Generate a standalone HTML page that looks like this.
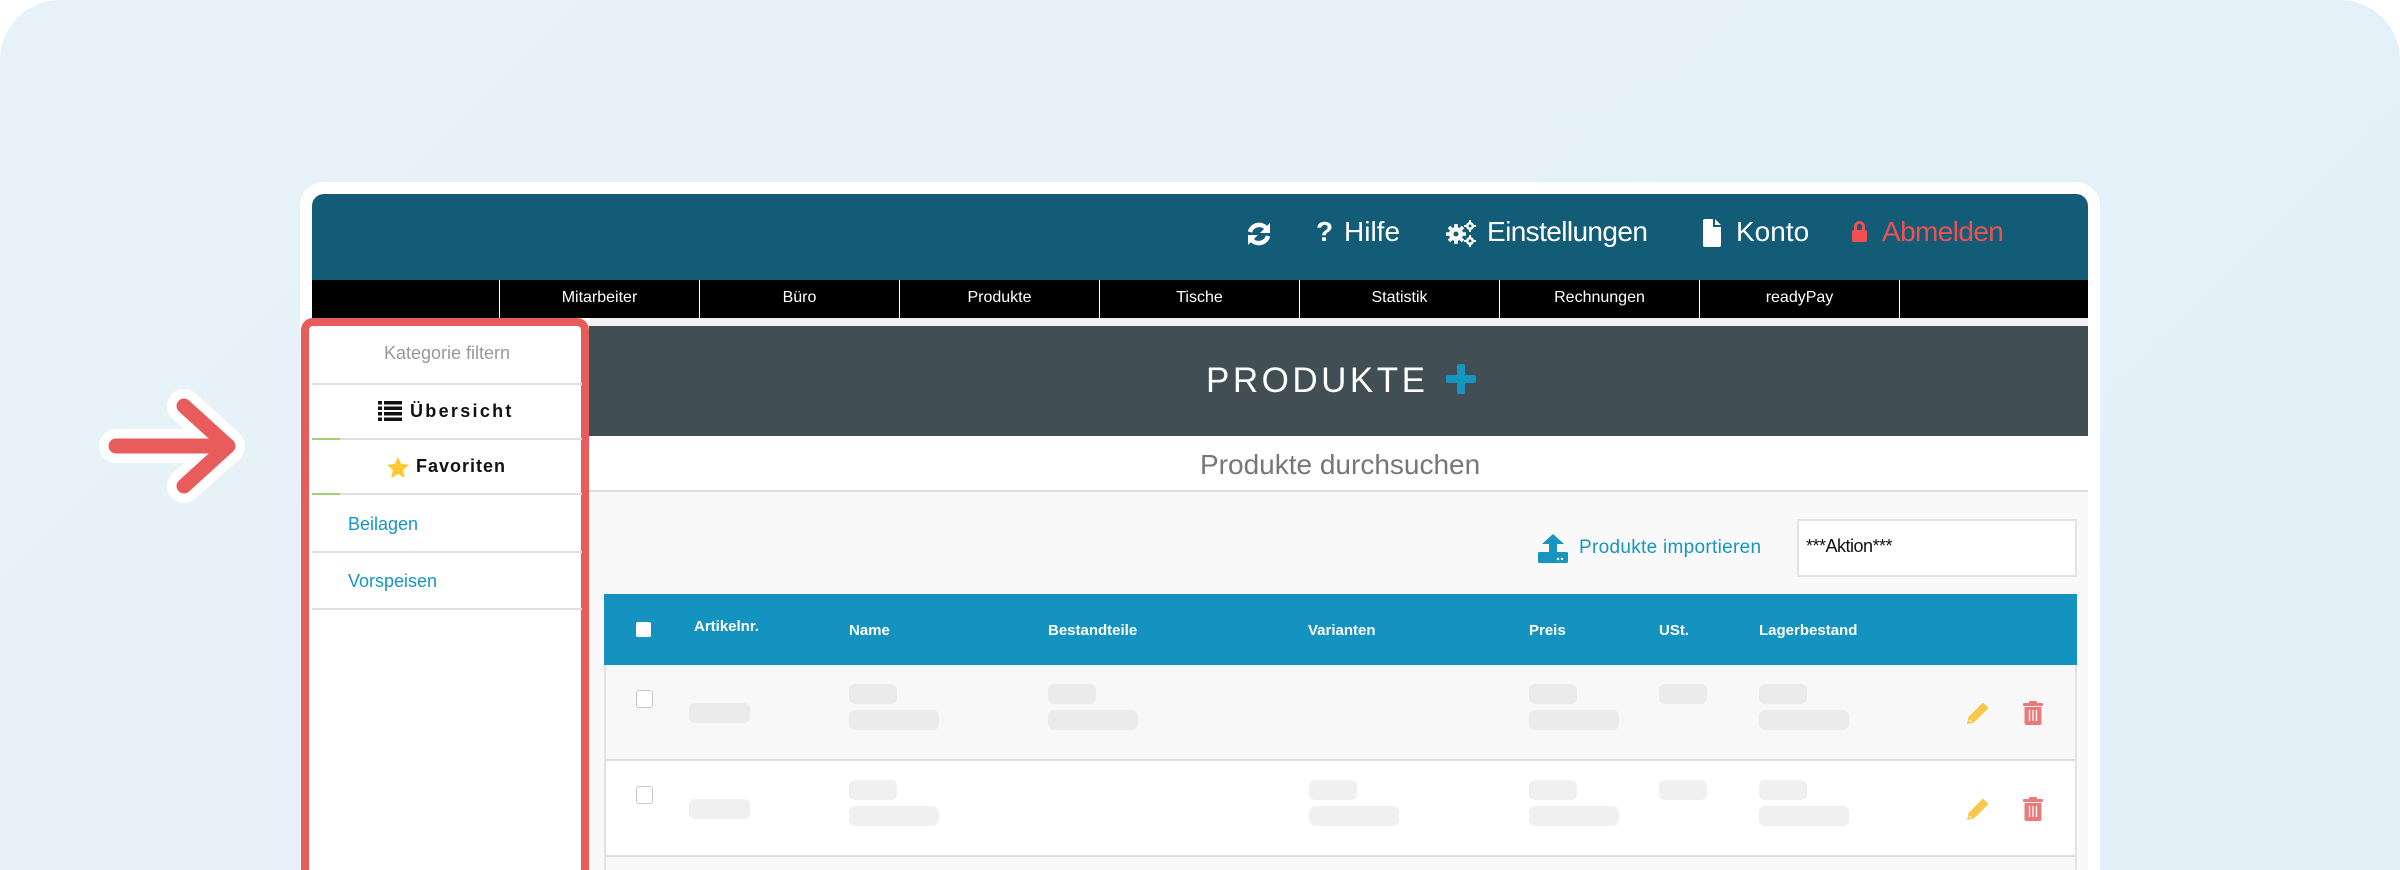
<!DOCTYPE html>
<html><head><meta charset="utf-8"><style>
*{margin:0;padding:0;box-sizing:border-box}
html,body{width:2400px;height:870px;overflow:hidden}
body{background:#fff;font-family:"Liberation Sans",sans-serif;position:relative}
#w{position:absolute;left:0;top:0;width:2400px;height:870px;overflow:hidden}
.a{position:absolute}
.bg{left:0;top:0;width:2400px;height:870px;background:linear-gradient(135deg,#e8f3f9,#e3f0f7);border-radius:60px 60px 0 0}
.t{white-space:nowrap}
.nav{color:#fff;font-size:16px;text-align:center;width:200px;border-left:1px solid #fff;height:38px}
.pill{position:absolute;background:#ebebeb;border-radius:6px;height:20px}
.th{color:#fff;font-weight:bold;font-size:15px;top:622px}
.cb{position:absolute;width:17px;height:18px;border:1px solid #c8c8c8;border-radius:3px;background:#fff}
.sl{left:312px;width:270px;height:2px;background:#e0e0e0}
.sl i{display:block;width:28px;height:2px;background:#9fd37a}
</style></head><body><div id="w">
<div class="a bg"></div>

<svg class="a" style="left:80px;top:370px" width="180" height="150" viewBox="0 0 180 150">
<g fill="none" stroke-linecap="round" stroke-linejoin="round">
<path d="M36 76 H146 M104 36 L148 76 L104 116" stroke="#fff" stroke-width="34"/>
<path d="M36 76 H146 M104 36 L148 76 L104 116" stroke="#e95c5c" stroke-width="15"/>
</g></svg>

<div class="a" style="left:300px;top:182px;width:1800px;height:688px;background:#fff;border-radius:24px 24px 0 0"></div>
<div class="a" style="left:312px;top:194px;width:1776px;height:86px;background:#135c78;border-radius:12px 12px 0 0"></div>
<div class="a" style="left:312px;top:280px;width:1776px;height:38px;background:#000"></div>
<div class="a nav" style="left:499px;top:280px;padding-top:9px">Mitarbeiter</div>
<div class="a nav" style="left:699px;top:280px;padding-top:9px">Büro</div>
<div class="a nav" style="left:899px;top:280px;padding-top:9px">Produkte</div>
<div class="a nav" style="left:1099px;top:280px;padding-top:9px">Tische</div>
<div class="a nav" style="left:1299px;top:280px;padding-top:9px">Statistik</div>
<div class="a nav" style="left:1499px;top:280px;padding-top:9px">Rechnungen</div>
<div class="a nav" style="left:1699px;top:280px;padding-top:9px">readyPay</div>
<div class="a" style="left:1899px;top:280px;width:1px;height:38px;background:#fff"></div>

<svg class="a" style="left:1246px;top:221px" width="26" height="26" viewBox="0 0 26 26"><g fill="none" stroke="#fff" stroke-width="4.5"><path d="M4 11 A9.5 9.5 0 0 1 21 8"/><path d="M22 15 A9.5 9.5 0 0 1 5 18"/></g><path d="M24 2 V12 H14Z M2 24 V14 H12Z" fill="#fff"/></svg>
<div class="a t" style="left:1316px;top:216px;font-size:28px;color:#fff;font-weight:bold">?</div>
<div class="a t" style="left:1344px;top:216px;font-size:28px;color:#fff">Hilfe</div>
<svg class="a" style="left:1445px;top:219px" width="32" height="28" viewBox="0 0 32 28"><g fill="#fff"><circle cx="11" cy="15" r="7"/><g stroke="#fff" stroke-width="3.5"><path d="M11 5v20M1 15h20M4 8l14 14M18 8L4 22"/></g><circle cx="11" cy="15" r="2.5" fill="#135c78"/><circle cx="25" cy="7" r="4"/><circle cx="25" cy="22" r="4"/><g stroke="#fff" stroke-width="2"><path d="M25 1v12M19 7h12M25 16v12M19 22h12"/></g><circle cx="25" cy="7" r="1.5" fill="#135c78"/><circle cx="25" cy="22" r="1.5" fill="#135c78"/></g></svg>
<div class="a t" style="left:1487px;top:216px;font-size:28px;color:#fff;letter-spacing:-0.6px">Einstellungen</div>
<svg class="a" style="left:1703px;top:219px" width="18" height="28" viewBox="0 0 18 28"><path d="M0 2 Q0 0 2 0 H10 V8 H18 V26 Q18 28 16 28 H2 Q0 28 0 26Z M12 0 L18 6 H12Z" fill="#fff"/></svg>
<div class="a t" style="left:1736px;top:216px;font-size:28px;color:#fff">Konto</div>
<svg class="a" style="left:1852px;top:220px" width="15" height="22" viewBox="0 0 15 22"><path d="M3.5 10 V6.5 A4 4 0 0 1 11.5 6.5 V10" fill="none" stroke="#f05050" stroke-width="3"/><rect x="0" y="10" width="15" height="12" rx="2" fill="#f05050"/></svg>
<div class="a t" style="left:1882px;top:216px;font-size:28px;color:#f05050;letter-spacing:-0.6px">Abmelden</div>

<div class="a" style="left:589px;top:318px;width:1499px;height:8px;background:#f0f0f0"></div>
<div class="a" style="left:589px;top:326px;width:1499px;height:110px;background:#414f55"></div>
<div class="a t" style="left:1206px;top:361px;font-size:35px;color:#fff;letter-spacing:3.5px">PRODUKTE</div>
<svg class="a" style="left:1446px;top:364px" width="30" height="30" viewBox="0 0 30 30"><path d="M11 2 Q11 0 13 0 H17 Q19 0 19 2 V11 H28 Q30 11 30 13 V17 Q30 19 28 19 H19 V28 Q19 30 17 30 H13 Q11 30 11 28 V19 H2 Q0 19 0 17 V13 Q0 11 2 11 H11Z" fill="#1795c1"/></svg>
<div class="a t" style="left:1200px;top:449px;font-size:28px;color:#777">Produkte durchsuchen</div>
<div class="a" style="left:589px;top:490px;width:1499px;height:2px;background:#ddd"></div>
<div class="a" style="left:589px;top:492px;width:1499px;height:378px;background:#f9f9f9"></div>

<svg class="a" style="left:1538px;top:534px" width="30" height="30" viewBox="0 0 30 30"><path d="M15 0 L26 10 H19 V19 H11 V10 H4Z" fill="#1795c1"/><rect x="0" y="18" width="30" height="11" rx="1.5" fill="#1795c1"/><rect x="11" y="17" width="8" height="3" fill="#1795c1"/><circle cx="20" cy="25" r="1.2" fill="#fff"/><circle cx="24" cy="25" r="1.2" fill="#fff"/></svg>
<div class="a t" style="left:1579px;top:537px;font-size:19px;color:#1795c1;letter-spacing:0.3px">Produkte importieren</div>
<div class="a" style="left:1797px;top:519px;width:280px;height:58px;background:#fff;border:2px solid #e3e3e3"></div>
<div class="a t" style="left:1806px;top:536px;font-size:18px;color:#111;letter-spacing:-0.5px">***Aktion***</div>

<div class="a" style="left:604px;top:594px;width:1473px;height:276px;border-left:2px solid #e3e3e3;border-right:2px solid #e3e3e3"></div>
<div class="a" style="left:604px;top:594px;width:1473px;height:71px;background:#1593c0"></div>
<div class="a" style="left:636px;top:622px;width:15px;height:15px;background:#fff;border-radius:2px"></div>
<div class="a th" style="left:694px;top:618px">Artikelnr.</div>
<div class="a th" style="left:849px">Name</div>
<div class="a th" style="left:1048px">Bestandteile</div>
<div class="a th" style="left:1308px">Varianten</div>
<div class="a th" style="left:1529px">Preis</div>
<div class="a th" style="left:1659px">USt.</div>
<div class="a th" style="left:1759px">Lagerbestand</div>

<div class="a" style="left:606px;top:665px;width:1469px;height:96px;background:#f8f8f8;border-bottom:2px solid #e0e0e0"></div>
<div class="a" style="left:606px;top:761px;width:1469px;height:96px;background:#fff;border-bottom:2px solid #e0e0e0"></div>
<div class="a" style="left:606px;top:857px;width:1469px;height:13px;background:#f8f8f8"></div>

<div class="cb" style="left:636px;top:690px"></div>
<div class="pill" style="left:689px;top:703px;width:61px"></div>
<div class="pill" style="left:849px;top:684px;width:48px"></div>
<div class="pill" style="left:849px;top:710px;width:90px"></div>
<div class="pill" style="left:1048px;top:684px;width:48px"></div>
<div class="pill" style="left:1048px;top:710px;width:90px"></div>
<div class="pill" style="left:1529px;top:684px;width:48px"></div>
<div class="pill" style="left:1529px;top:710px;width:90px"></div>
<div class="pill" style="left:1659px;top:684px;width:48px"></div>
<div class="pill" style="left:1759px;top:684px;width:48px"></div>
<div class="pill" style="left:1759px;top:710px;width:90px"></div>
<div class="cb" style="left:636px;top:786px"></div>
<div class="pill" style="left:689px;top:799px;width:61px;background:#f0f0f0"></div>
<div class="pill" style="left:849px;top:780px;width:48px;background:#f0f0f0"></div>
<div class="pill" style="left:849px;top:806px;width:90px;background:#f0f0f0"></div>
<div class="pill" style="left:1309px;top:780px;width:48px;background:#f0f0f0"></div>
<div class="pill" style="left:1309px;top:806px;width:90px;background:#f0f0f0"></div>
<div class="pill" style="left:1529px;top:780px;width:48px;background:#f0f0f0"></div>
<div class="pill" style="left:1529px;top:806px;width:90px;background:#f0f0f0"></div>
<div class="pill" style="left:1659px;top:780px;width:48px;background:#f0f0f0"></div>
<div class="pill" style="left:1759px;top:780px;width:48px;background:#f0f0f0"></div>
<div class="pill" style="left:1759px;top:806px;width:90px;background:#f0f0f0"></div>

<svg class="a" style="left:1966px;top:701px" width="24" height="24" viewBox="0 0 24 24"><path d="M17 1.5 L22.5 7 L8 21.5 L1 23 L2.5 16Z" fill="#f8c84a"/><path d="M3.5 19 L5 20.5" stroke="#fff" stroke-width="1.5"/></svg>
<svg class="a" style="left:2023px;top:701px" width="20" height="24" viewBox="0 0 20 24"><rect x="0" y="2" width="20" height="3" rx="1" fill="#ec7a7a"/><rect x="6" y="0" width="8" height="3" rx="1" fill="#ec7a7a"/><path d="M1.5 6 H18.5 V22 Q18.5 24 16.5 24 H3.5 Q1.5 24 1.5 22Z" fill="#ec7a7a"/><path d="M6.5 9 V20 M10 9 V20 M13.5 9 V20" stroke="#fff" stroke-width="1.3"/></svg>
<svg class="a" style="left:1966px;top:797px" width="24" height="24" viewBox="0 0 24 24"><path d="M17 1.5 L22.5 7 L8 21.5 L1 23 L2.5 16Z" fill="#f8c84a"/><path d="M3.5 19 L5 20.5" stroke="#fff" stroke-width="1.5"/></svg>
<svg class="a" style="left:2023px;top:797px" width="20" height="24" viewBox="0 0 20 24"><rect x="0" y="2" width="20" height="3" rx="1" fill="#ec7a7a"/><rect x="6" y="0" width="8" height="3" rx="1" fill="#ec7a7a"/><path d="M1.5 6 H18.5 V22 Q18.5 24 16.5 24 H3.5 Q1.5 24 1.5 22Z" fill="#ec7a7a"/><path d="M6.5 9 V20 M10 9 V20 M13.5 9 V20" stroke="#fff" stroke-width="1.3"/></svg>

<div class="a" style="left:301px;top:318px;width:288px;height:552px;background:#fff;border:8px solid #e85c5c;border-bottom:none;border-radius:12px 12px 0 0"></div>
<div class="a t" style="left:312px;width:270px;text-align:center;top:343px;font-size:18px;color:#999">Kategorie filtern</div>
<div class="a sl" style="top:383px"></div>
<svg class="a" style="left:378px;top:401px" width="24" height="20" viewBox="0 0 24 20"><g fill="#111"><rect x="0" y="0" width="4" height="3.5"/><rect x="6" y="0" width="18" height="3.5"/><rect x="0" y="5.5" width="4" height="3.5"/><rect x="6" y="5.5" width="18" height="3.5"/><rect x="0" y="11" width="4" height="3.5"/><rect x="6" y="11" width="18" height="3.5"/><rect x="0" y="16.5" width="4" height="3.5"/><rect x="6" y="16.5" width="18" height="3.5"/></g></svg>
<div class="a t" style="left:410px;top:401px;font-size:18px;font-weight:bold;color:#111;letter-spacing:2.3px">Übersicht</div>
<div class="a sl" style="top:438px"><i></i></div>
<svg class="a" style="left:387px;top:457px" width="22" height="21" viewBox="0 0 22 21"><path d="M11 0 L14.2 7 L22 7.8 L16.1 13 L17.8 21 L11 17 L4.2 21 L5.9 13 L0 7.8 L7.8 7Z" fill="#fbc934"/></svg>
<div class="a t" style="left:416px;top:456px;font-size:18px;font-weight:bold;color:#111;letter-spacing:1px">Favoriten</div>
<div class="a sl" style="top:493px"><i></i></div>
<div class="a t" style="left:348px;top:514px;font-size:18px;color:#1795c1">Beilagen</div>
<div class="a sl" style="top:551px"></div>
<div class="a t" style="left:348px;top:571px;font-size:18px;color:#1795c1">Vorspeisen</div>
<div class="a sl" style="top:608px"></div>
</div></body></html>
